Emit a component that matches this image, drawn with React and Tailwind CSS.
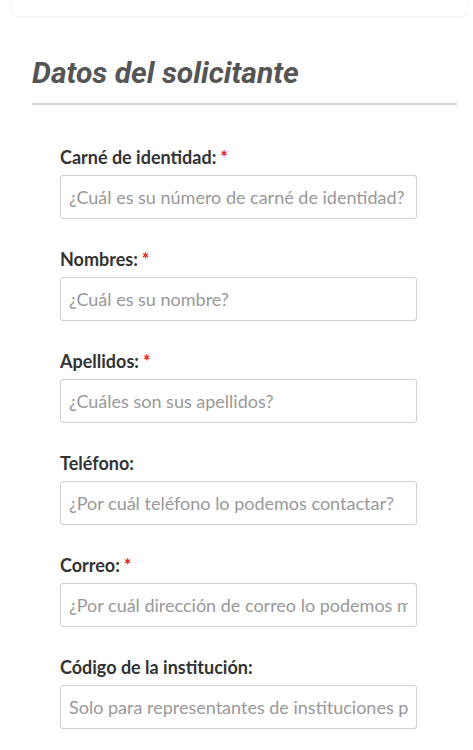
const fields = [
  { label: "Carné de identidad:", required: true, placeholder: "¿Cuál es su número de carné de identidad?" },
  { label: "Nombres:", required: true, placeholder: "¿Cuál es su nombre?" },
  { label: "Apellidos:", required: true, placeholder: "¿Cuáles son sus apellidos?" },
  { label: "Teléfono:", required: false, placeholder: "¿Por cuál teléfono lo podemos contactar?" },
  { label: "Correo:", required: true, placeholder: "¿Por cuál dirección de correo lo podemos mandar?" },
  { label: "Código de la institución:", required: false, placeholder: "Solo para representantes de instituciones públicas" },
];

export default function App() {
  return (
    <div className="h-[750px] bg-white overflow-hidden">
      {/* top card edge */}
      <div className="ml-3 mr-[6px] h-4 rounded-b-md bg-white shadow-[0_1px_3px_rgba(0,0,0,0.08)]"></div>

      <div className="pl-8 pr-4 pt-[40px]">
        <h2 className="font-['Roboto',sans-serif] italic font-bold text-[30px] leading-[34px] text-[#555]">
          Datos del solicitante
        </h2>
        <div className="mt-[13px] h-[2px] bg-[#d6d6d6]"></div>
      </div>

      <form className="pl-[60px] pr-[56px] pt-[40px] flex flex-col gap-[28px] font-['Lato',sans-serif]">
        {fields.map((f) => (
          <div key={f.label} className="flex flex-col">
            <label className="text-[18px] leading-[24px] font-bold text-[#333] mb-[6px]">
              {f.label}
              {f.required && <span className="text-[#e02424] ml-1">*</span>}
            </label>
            <input
              type="text"
              placeholder={f.placeholder}
              className="h-[44px] w-full border border-[#cfcfcf] rounded-[3px] px-2 text-[18px] text-[#333] placeholder:text-[#999] bg-white outline-none"
            />
          </div>
        ))}
      </form>
    </div>
  );
}
